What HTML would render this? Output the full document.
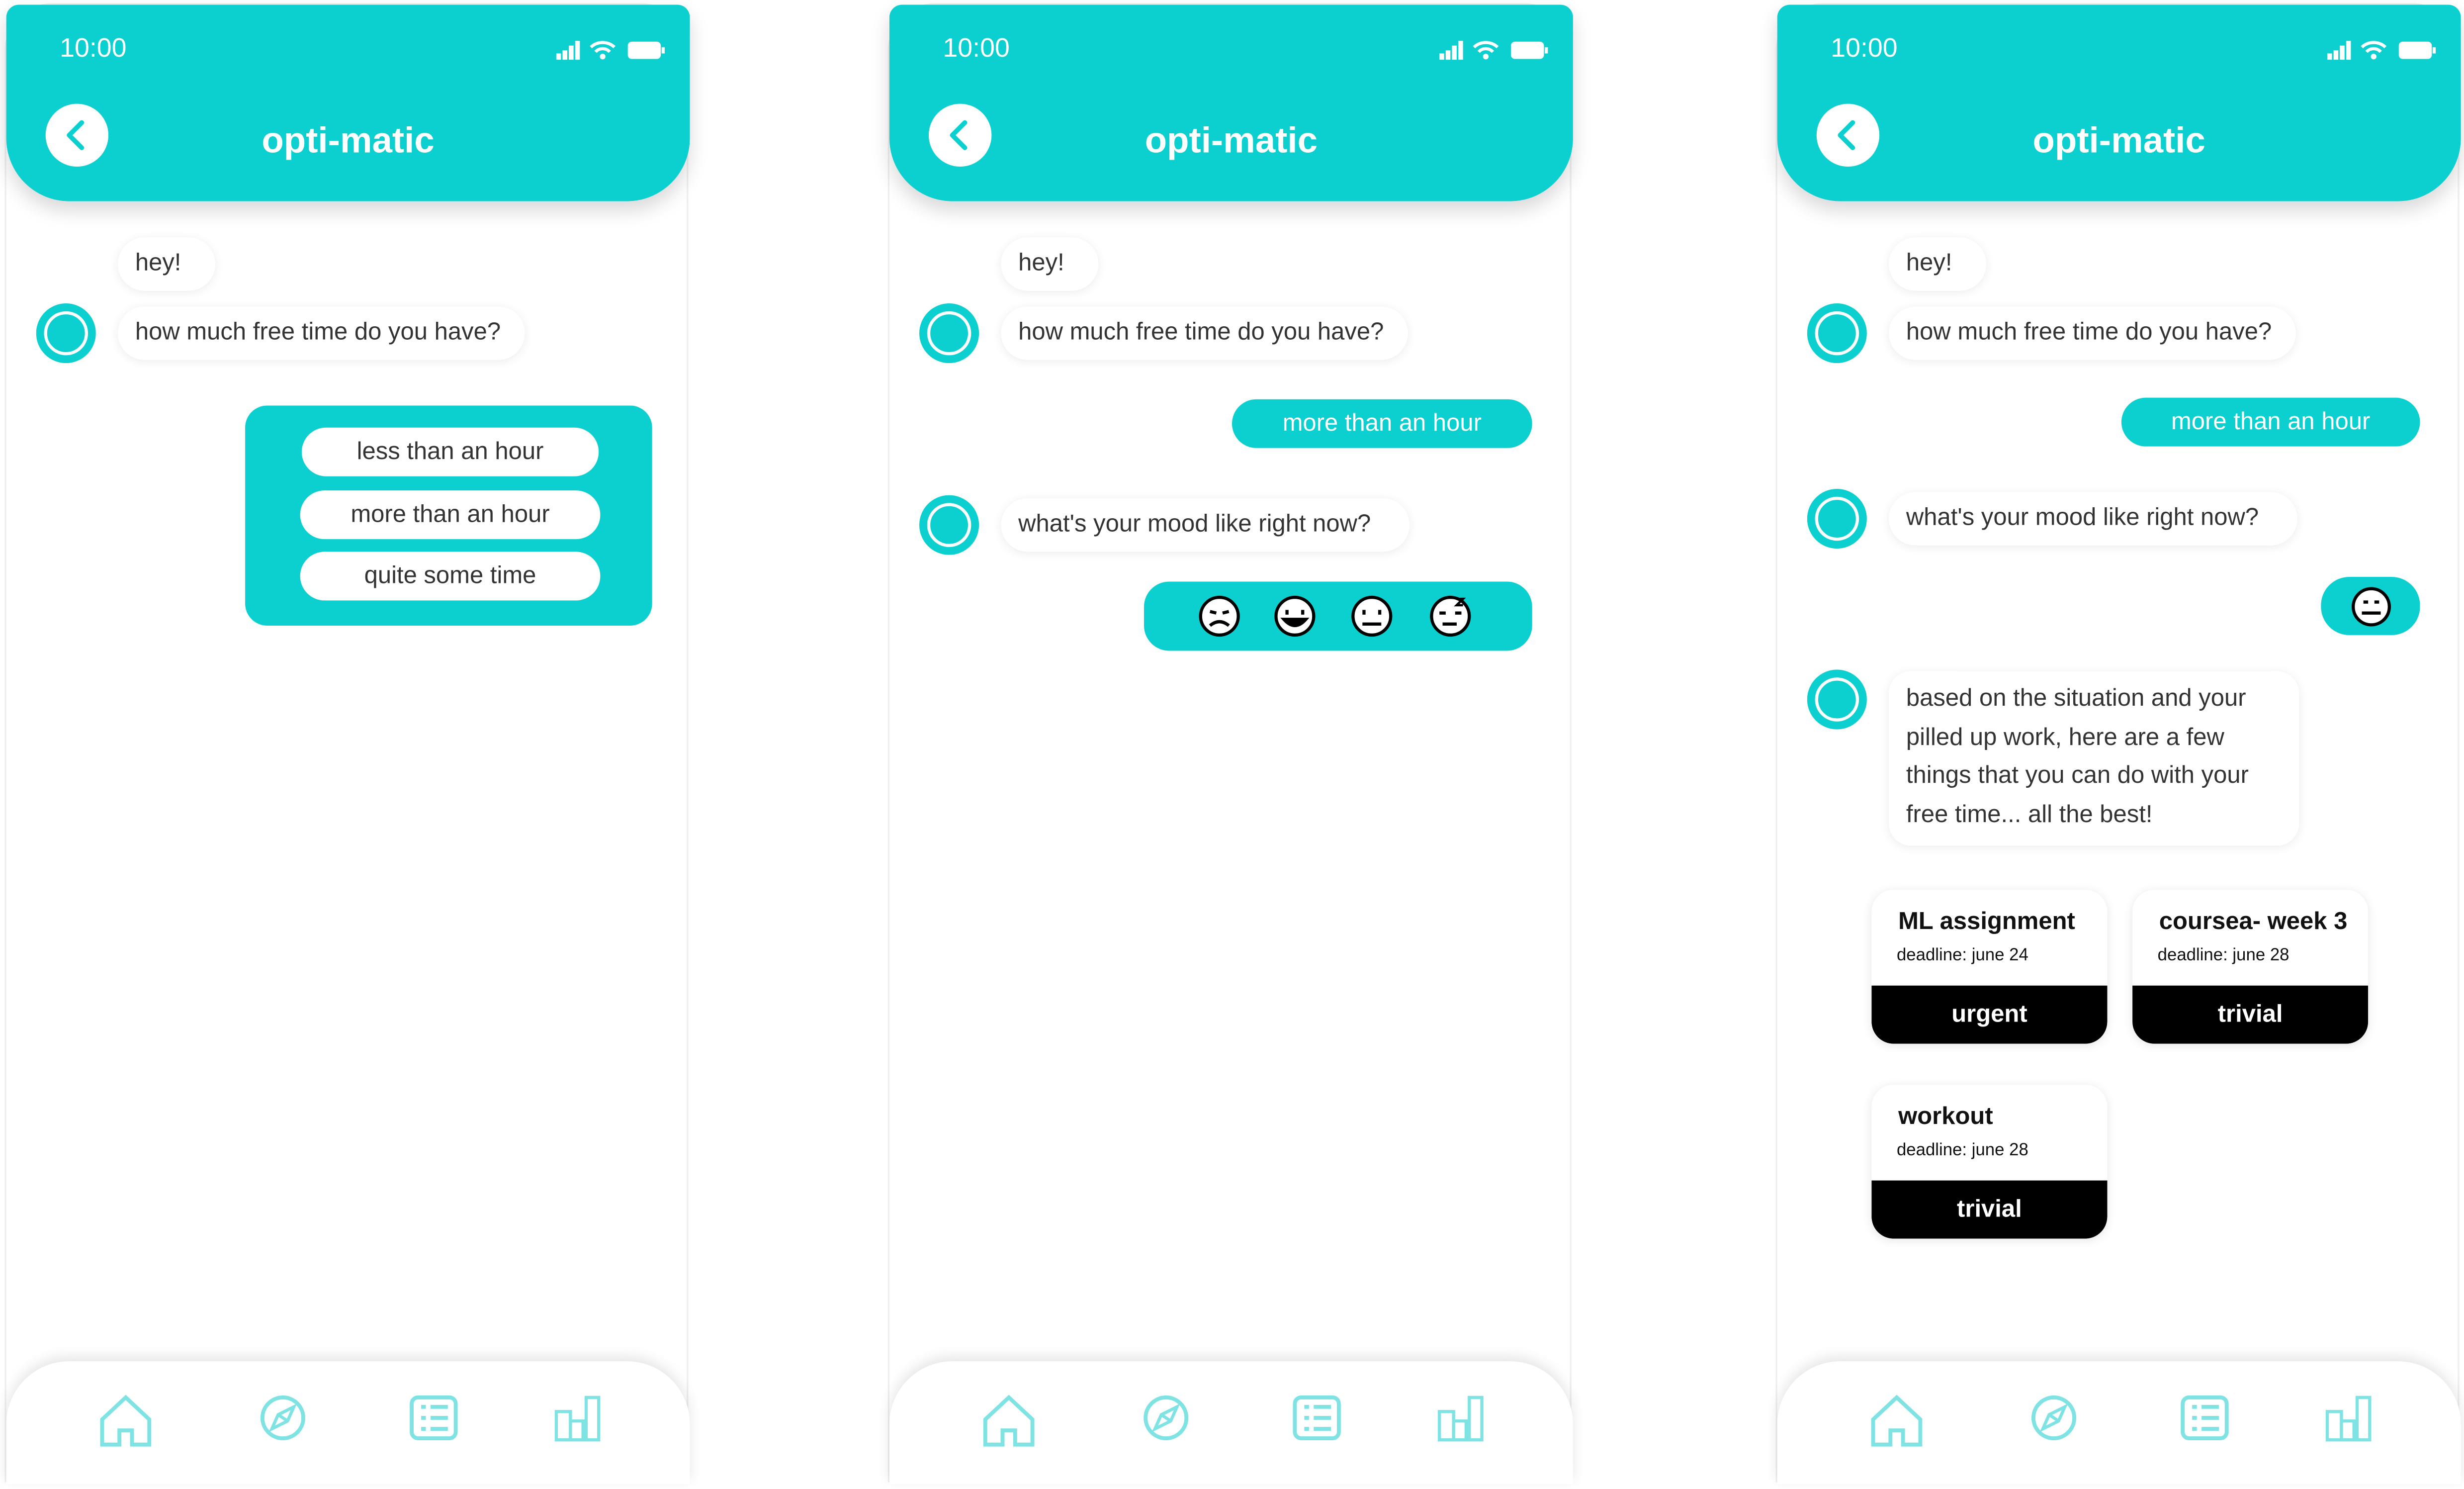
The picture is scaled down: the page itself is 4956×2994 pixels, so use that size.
<!DOCTYPE html>
<html><head><meta charset="utf-8">
<style>
*{margin:0;padding:0;box-sizing:border-box}
html,body{width:4956px;height:2994px;overflow:hidden;background:#fff}
#w{position:absolute;left:0;top:0;width:1568px;height:947.3px;transform:scale(3.1607);transform-origin:0 0;font-family:"Liberation Sans",sans-serif;color:#222}
.ph{position:absolute;top:2px;width:435px;height:941px;background:#fff;border:1px solid #eee;border-radius:30px 30px 0 0}
.hd{position:absolute;left:0;top:0;width:435px;height:125px;background:#0ccfcf;border-radius:8px 8px 40px 40px;box-shadow:0 6px 12px rgba(0,0,0,.15)}
.tm{position:absolute;left:34px;top:18px;color:#fff;font-size:17px}
.si{position:absolute;left:348px;top:22px}
.bk{position:absolute;left:25px;top:63px;width:40px;height:40px;border-radius:50%;background:#fff}
.tt{position:absolute;left:0;width:435px;top:73px;text-align:center;color:#fff;font-size:23px;font-weight:bold}
.b{position:absolute;height:34px;border-radius:17px;background:#fff;box-shadow:0 1px 6px rgba(0,0,0,.08);font-size:15.5px;line-height:34px;padding-left:11px;color:#333}
.av{position:absolute;width:38px;height:38px}
.tp{position:absolute;background:#0ccfcf;color:#fff;font-size:15.5px;text-align:center;border-radius:16px}
.opt{position:absolute;background:#fff;border-radius:16px;height:31px;line-height:31px;text-align:center;font-size:15.5px;color:#333}
.nav{position:absolute;left:0;top:863px;width:435px;height:78px;background:#fff;border-radius:40px 40px 0 0;box-shadow:0 -3px 8px rgba(0,0,0,.1)}
.nav svg{position:absolute;top:20px}
.cd{position:absolute;width:150px;height:98px;border-radius:14px;background:#fff;box-shadow:0 1px 6px rgba(0,0,0,.1);overflow:hidden}
.cd .t{position:absolute;left:17px;top:12px;font-size:15.5px;font-weight:bold;color:#111}
.cd .d{position:absolute;left:16px;top:36px;font-size:11px;color:#111}
.cd .k{position:absolute;left:0;bottom:0;width:150px;height:37px;background:#000;color:#fff;font-weight:bold;font-size:15.5px;text-align:center;line-height:37px;border-radius:0 0 14px 14px}
</style></head><body><div id="w">

<div class="ph" style="left:3px">
 <div class="hd"><div class="tm">10:00</div>
  <svg class="si" width="74" height="14" viewBox="0 0 74 14"><rect x="2" y="9" width="3" height="4" fill="#fff"/><rect x="6" y="7" width="3" height="6" fill="#fff"/><rect x="10" y="4" width="3" height="9" fill="#fff"/><rect x="14" y="1" width="3" height="12" fill="#fff"/><path d="M24 5a11 11 0 0 1 15 0M27 8a6 6 0 0 1 9 0" stroke="#fff" stroke-width="2" fill="none"/><circle cx="31.5" cy="11" r="1.8" fill="#fff"/><rect x="48" y="2" width="20" height="10" rx="2" fill="#fff" stroke="#fff"/><rect x="69" y="5" width="2" height="4" fill="#fff"/></svg>
  <div class="bk"><svg width="40" height="40"><path d="M23 12l-8 8 8 8" stroke="#0ccfcf" stroke-width="3" fill="none" stroke-linecap="round" stroke-linejoin="round"/></svg></div>
  <div class="tt">opti-matic</div></div>
 <div class="b" style="left:71px;top:148px;width:62px">hey!</div>
 <svg class="av" style="left:19px;top:190px" viewBox="0 0 38 38"><circle cx="19" cy="19" r="19" fill="#0ccfcf"/><circle cx="19" cy="19" r="13" fill="#0ccfcf" stroke="#fff" stroke-width="2"/></svg>
 <div class="b" style="left:71px;top:192px;width:259px">how much free time do you have?</div>
 <div class="tp" style="left:152px;top:255px;width:259px;height:140px;border-radius:14px"></div>
 <div class="opt" style="left:188px;top:269px;width:189px">less than an hour</div>
 <div class="opt" style="left:187px;top:309px;width:191px">more than an hour</div>
 <div class="opt" style="left:187px;top:348px;width:191px">quite some time</div>
 <div class="nav">
  <svg style="left:58px" width="36" height="36" viewBox="0 0 36 36"><path d="M3 17L18 3l15 14v16H22v-9h-8v9H3z" stroke="#7fe3e3" stroke-width="2.5" fill="none"/></svg>
  <svg style="left:160px" width="32" height="32" viewBox="0 0 32 32"><circle cx="16" cy="16" r="13" stroke="#7fe3e3" stroke-width="2.5" fill="none"/><path d="M9 23l4-9 10-5-4 9z M13 14l6 4" stroke="#7fe3e3" stroke-width="2" fill="none"/></svg>
  <svg style="left:256px" width="32" height="32" viewBox="0 0 32 32"><rect x="2" y="3" width="28" height="26" rx="4" stroke="#7fe3e3" stroke-width="2.5" fill="none"/><path d="M8 9h3M8 16h3M8 23h3M14 9h11M14 16h11M14 23h11" stroke="#7fe3e3" stroke-width="2.5"/></svg>
  <svg style="left:348px" width="32" height="32" viewBox="0 0 32 32"><path d="M2 12h9v18H2zM11 18h8v12h-8zM21 3h8v27h-8z" stroke="#7fe3e3" stroke-width="2" fill="none"/></svg>
 </div>
</div>

<div class="ph" style="left:565px">
 <div class="hd"><div class="tm">10:00</div>
  <svg class="si" width="74" height="14" viewBox="0 0 74 14"><rect x="2" y="9" width="3" height="4" fill="#fff"/><rect x="6" y="7" width="3" height="6" fill="#fff"/><rect x="10" y="4" width="3" height="9" fill="#fff"/><rect x="14" y="1" width="3" height="12" fill="#fff"/><path d="M24 5a11 11 0 0 1 15 0M27 8a6 6 0 0 1 9 0" stroke="#fff" stroke-width="2" fill="none"/><circle cx="31.5" cy="11" r="1.8" fill="#fff"/><rect x="48" y="2" width="20" height="10" rx="2" fill="#fff" stroke="#fff"/><rect x="69" y="5" width="2" height="4" fill="#fff"/></svg>
  <div class="bk"><svg width="40" height="40"><path d="M23 12l-8 8 8 8" stroke="#0ccfcf" stroke-width="3" fill="none" stroke-linecap="round" stroke-linejoin="round"/></svg></div>
  <div class="tt">opti-matic</div></div>
 <div class="b" style="left:71px;top:148px;width:62px">hey!</div>
 <svg class="av" style="left:19px;top:190px" viewBox="0 0 38 38"><circle cx="19" cy="19" r="19" fill="#0ccfcf"/><circle cx="19" cy="19" r="13" fill="#0ccfcf" stroke="#fff" stroke-width="2"/></svg>
 <div class="b" style="left:71px;top:192px;width:259px">how much free time do you have?</div>
 <div class="tp" style="left:218px;top:251px;width:191px;height:31px;line-height:31px">more than an hour</div>
 <svg class="av" style="left:19px;top:312px" viewBox="0 0 38 38"><circle cx="19" cy="19" r="19" fill="#0ccfcf"/><circle cx="19" cy="19" r="13" fill="#0ccfcf" stroke="#fff" stroke-width="2"/></svg>
 <div class="b" style="left:71px;top:314px;width:260px">what's your mood like right now?</div>
 <div class="tp" style="left:162px;top:367px;width:247px;height:44px"></div>
 <svg style="position:absolute;left:195px;top:375px" width="180" height="28" viewBox="0 0 180 28">
  <g fill="#fff" stroke="#000" stroke-width="2"><circle cx="15" cy="14" r="12"/><circle cx="63" cy="14" r="12"/><circle cx="112" cy="14" r="12"/><circle cx="162" cy="14" r="12"/></g>
  <g stroke="#000" stroke-width="2" fill="none"><path d="M9 11l4 1M21 11l-4 1M9 20q6-5 12 0"/><path d="M58 10v3M68 10v3"/><path d="M56 16h14q-7 8-14 0z" fill="#000"/><path d="M107 10v3M117 10v3M106 19h12"/><path d="M155 12h4M165 12h4M157 19h9"/><path d="M166 3h4l-4 4h4" stroke-width="1.5"/></g>
 </svg>
 <div class="nav">
  <svg style="left:58px" width="36" height="36" viewBox="0 0 36 36"><path d="M3 17L18 3l15 14v16H22v-9h-8v9H3z" stroke="#7fe3e3" stroke-width="2.5" fill="none"/></svg>
  <svg style="left:160px" width="32" height="32" viewBox="0 0 32 32"><circle cx="16" cy="16" r="13" stroke="#7fe3e3" stroke-width="2.5" fill="none"/><path d="M9 23l4-9 10-5-4 9z M13 14l6 4" stroke="#7fe3e3" stroke-width="2" fill="none"/></svg>
  <svg style="left:256px" width="32" height="32" viewBox="0 0 32 32"><rect x="2" y="3" width="28" height="26" rx="4" stroke="#7fe3e3" stroke-width="2.5" fill="none"/><path d="M8 9h3M8 16h3M8 23h3M14 9h11M14 16h11M14 23h11" stroke="#7fe3e3" stroke-width="2.5"/></svg>
  <svg style="left:348px" width="32" height="32" viewBox="0 0 32 32"><path d="M2 12h9v18H2zM11 18h8v12h-8zM21 3h8v27h-8z" stroke="#7fe3e3" stroke-width="2" fill="none"/></svg>
 </div>
</div>

<div class="ph" style="left:1130px">
 <div class="hd"><div class="tm">10:00</div>
  <svg class="si" width="74" height="14" viewBox="0 0 74 14"><rect x="2" y="9" width="3" height="4" fill="#fff"/><rect x="6" y="7" width="3" height="6" fill="#fff"/><rect x="10" y="4" width="3" height="9" fill="#fff"/><rect x="14" y="1" width="3" height="12" fill="#fff"/><path d="M24 5a11 11 0 0 1 15 0M27 8a6 6 0 0 1 9 0" stroke="#fff" stroke-width="2" fill="none"/><circle cx="31.5" cy="11" r="1.8" fill="#fff"/><rect x="48" y="2" width="20" height="10" rx="2" fill="#fff" stroke="#fff"/><rect x="69" y="5" width="2" height="4" fill="#fff"/></svg>
  <div class="bk"><svg width="40" height="40"><path d="M23 12l-8 8 8 8" stroke="#0ccfcf" stroke-width="3" fill="none" stroke-linecap="round" stroke-linejoin="round"/></svg></div>
  <div class="tt">opti-matic</div></div>
 <div class="b" style="left:71px;top:148px;width:62px">hey!</div>
 <svg class="av" style="left:19px;top:190px" viewBox="0 0 38 38"><circle cx="19" cy="19" r="19" fill="#0ccfcf"/><circle cx="19" cy="19" r="13" fill="#0ccfcf" stroke="#fff" stroke-width="2"/></svg>
 <div class="b" style="left:71px;top:192px;width:259px">how much free time do you have?</div>
 <div class="tp" style="left:219px;top:250px;width:190px;height:31px;line-height:31px">more than an hour</div>
 <svg class="av" style="left:19px;top:308px" viewBox="0 0 38 38"><circle cx="19" cy="19" r="19" fill="#0ccfcf"/><circle cx="19" cy="19" r="13" fill="#0ccfcf" stroke="#fff" stroke-width="2"/></svg>
 <div class="b" style="left:71px;top:310px;width:260px">what's your mood like right now?</div>
 <div class="tp" style="left:346px;top:364px;width:63px;height:37px;border-radius:18px"></div>
 <svg style="position:absolute;left:365px;top:370px" width="26" height="26" viewBox="0 0 26 26"><circle cx="13" cy="13" r="11.5" fill="#fff" stroke="#000" stroke-width="2"/><path d="M8 10h3M15 10h3M7 17h12" stroke="#000" stroke-width="2"/></svg>
 <svg class="av" style="left:19px;top:423px" viewBox="0 0 38 38"><circle cx="19" cy="19" r="19" fill="#0ccfcf"/><circle cx="19" cy="19" r="13" fill="#0ccfcf" stroke="#fff" stroke-width="2"/></svg>
 <div class="b" style="left:71px;top:424px;width:261px;height:111px;border-radius:14px;line-height:24.5px;padding-top:6px;white-space:nowrap">based on the situation and your<br>pilled up work, here are a few<br>things that you can do with your<br>free time... all the best!</div>
 <div class="cd" style="left:60px;top:563px"><div class="t">ML assignment</div><div class="d">deadline: june 24</div><div class="k">urgent</div></div>
 <div class="cd" style="left:226px;top:563px"><div class="t">coursea- week 3</div><div class="d">deadline: june 28</div><div class="k">trivial</div></div>
 <div class="cd" style="left:60px;top:687px"><div class="t">workout</div><div class="d">deadline: june 28</div><div class="k">trivial</div></div>
 <div class="nav">
  <svg style="left:58px" width="36" height="36" viewBox="0 0 36 36"><path d="M3 17L18 3l15 14v16H22v-9h-8v9H3z" stroke="#7fe3e3" stroke-width="2.5" fill="none"/></svg>
  <svg style="left:160px" width="32" height="32" viewBox="0 0 32 32"><circle cx="16" cy="16" r="13" stroke="#7fe3e3" stroke-width="2.5" fill="none"/><path d="M9 23l4-9 10-5-4 9z M13 14l6 4" stroke="#7fe3e3" stroke-width="2" fill="none"/></svg>
  <svg style="left:256px" width="32" height="32" viewBox="0 0 32 32"><rect x="2" y="3" width="28" height="26" rx="4" stroke="#7fe3e3" stroke-width="2.5" fill="none"/><path d="M8 9h3M8 16h3M8 23h3M14 9h11M14 16h11M14 23h11" stroke="#7fe3e3" stroke-width="2.5"/></svg>
  <svg style="left:348px" width="32" height="32" viewBox="0 0 32 32"><path d="M2 12h9v18H2zM11 18h8v12h-8zM21 3h8v27h-8z" stroke="#7fe3e3" stroke-width="2" fill="none"/></svg>
 </div>
</div>

</div></body></html>
